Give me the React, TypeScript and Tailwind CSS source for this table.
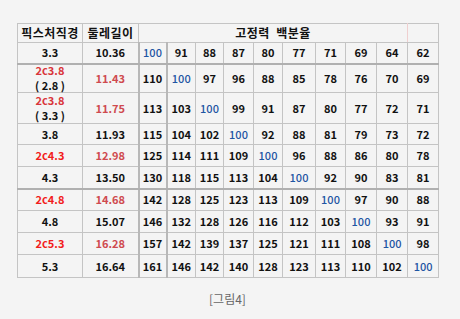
const widths = [65, 56, 28, 29, 28, 30, 29, 33, 30, 31, 31, 31];

type Row = {
  dia: string;
  sub?: string;
  red?: boolean;
  len: string;
  vals: number[];
  h: string;
  thick?: boolean;
};

const rows: Row[] = [
  { dia: "3.3", len: "10.36", vals: [100, 91, 88, 87, 80, 77, 71, 69, 64, 62], h: "h-[21px]", thick: true },
  { dia: "2c3.8", sub: "( 2.8 )", red: true, len: "11.43", vals: [110, 100, 97, 96, 88, 85, 78, 76, 70, 69], h: "h-[29px]" },
  { dia: "2c3.8", sub: "( 3.3 )", red: true, len: "11.75", vals: [113, 103, 100, 99, 91, 87, 80, 77, 72, 71], h: "h-[31px]" },
  { dia: "3.8", len: "11.93", vals: [115, 104, 102, 100, 92, 88, 81, 79, 73, 72], h: "h-[21px]" },
  { dia: "2c4.3", red: true, len: "12.98", vals: [125, 114, 111, 109, 100, 96, 88, 86, 80, 78], h: "h-[22px]" },
  { dia: "4.3", len: "13.50", vals: [130, 118, 115, 113, 104, 100, 92, 90, 83, 81], h: "h-[22px]", thick: true },
  { dia: "2c4.8", red: true, len: "14.68", vals: [142, 128, 125, 123, 113, 109, 100, 97, 90, 88], h: "h-[22px]" },
  { dia: "4.8", len: "15.07", vals: [146, 132, 128, 126, 116, 112, 103, 100, 93, 91], h: "h-[22px]" },
  { dia: "2c5.3", red: true, len: "16.28", vals: [157, 142, 139, 137, 125, 121, 111, 108, 100, 98], h: "h-[22px]" },
  { dia: "5.3", len: "16.64", vals: [161, 146, 142, 140, 128, 123, 113, 110, 102, 100], h: "h-[23px]" },
];

export default function App() {
  return (
    <div
      className="w-[460px] h-[319px] bg-[#f4f4f4] pt-[23px] pl-[17px]"
      style={{ fontFamily: '"Noto Sans CJK KR", "Noto Sans", sans-serif' }}
    >
      <table className="table-fixed border-collapse w-[421px] text-[11px] font-bold text-[#111] leading-none">
        <colgroup>
          {widths.map((w, i) => (
            <col key={i} style={{ width: w }} />
          ))}
        </colgroup>
        <tbody>
          <tr className="h-[19px]">
            <td className="border border-[#c4c4c4] text-center text-[12px] tracking-[0.5px]">픽스처직경</td>
            <td className="border border-[#c4c4c4] text-center text-[12px] tracking-[0.5px]">둘레길이</td>
            <td
              colSpan={9}
              className="border border-[#c4c4c4] border-r-[#efcfcf] text-center text-[12px] tracking-[0.5px]"
            >
              고정력&nbsp; 백분율
            </td>
            <td className="border border-[#c4c4c4]"></td>
          </tr>
          {rows.map((r, ri) => (
            <tr key={ri} className={r.h}>
              <td
                className={`border border-[#c4c4c4] text-center ${r.thick ? "border-b-2 border-b-[#b0b0b0]" : ""}`}
              >
                <div className={r.red ? (r.sub ? "text-[#d9343a]" : "text-[#f21c1c]") : ""}>{r.dia}</div>
                {r.sub && <div className="mt-[4px]">{r.sub}</div>}
              </td>
              <td
                className={`border border-[#c4c4c4] text-center ${r.red ? "text-[#cf4a4f]" : ""} ${r.thick ? "border-b-2 border-b-[#b0b0b0]" : ""}`}
              >
                {r.len}
              </td>
              {r.vals.map((v, vi) => (
                <td
                  key={vi}
                  className={`border border-[#c4c4c4] text-center ${vi === ri ? "text-[#1f56a3] font-medium" : ""} ${vi === 0 ? "border-l-2 border-l-[#b8b8b8]" : ""} ${vi === 1 ? "border-l-2 border-l-[#b8b8b8]" : ""} ${r.thick ? "border-b-2 border-b-[#b0b0b0]" : ""}`}
                >
                  {v}
                </td>
              ))}
            </tr>
          ))}
        </tbody>
      </table>
      <div className="w-[421px] mt-[12px] text-center text-[12px] text-[#666]">[그림4]</div>
    </div>
  );
}
